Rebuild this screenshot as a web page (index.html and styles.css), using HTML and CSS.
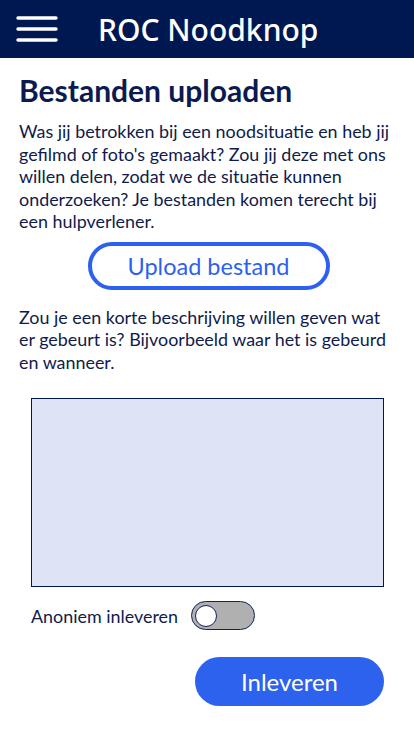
FILE: index.html
```html
<!DOCTYPE html>
<html lang="nl">
<head>
<meta charset="utf-8">
<title>ROC Noodknop</title>
<link rel="stylesheet" href="styles.css">
</head>
<body>
<header class="topbar">
  <button class="menu" aria-label="Menu">
    <svg width="42" height="26" viewBox="0 0 42 26"><g stroke="#fff" stroke-width="3.4" stroke-linecap="round"><line x1="2" y1="2" x2="40" y2="2"/><line x1="2" y1="13" x2="40" y2="13"/><line x1="2" y1="24" x2="40" y2="24"/></g></svg>
  </button>
  <h1 class="brand">ROC Noodknop</h1>
</header>
<main class="content">
  <h2 class="title">Bestanden uploaden</h2>
  <p class="text">Was jij betrokken bij een noodsituatie en heb jij gefilmd of foto's gemaakt? Zou jij deze met ons willen delen, zodat we de situatie kunnen onderzoeken? Je bestanden komen terecht bij een hulpverlener.</p>
  <div class="upload-wrap"><button class="upload">Upload bestand</button></div>
  <p class="text">Zou je een korte beschrijving willen geven wat er gebeurt is? Bijvoorbeeld waar het is gebeurd en wanneer.</p>
  <div class="form">
    <textarea class="desc" autofocus></textarea>
    <label class="anon">Anoniem inleveren <span class="toggle"><span class="knob"></span></span></label>
    <div class="submit-row"><button class="submit">Inleveren</button></div>
  </div>
</main>
</body>
</html>
```
FILE: styles.css
```css
* { box-sizing: border-box; }
body { margin: 0; font-family: Lato, "Open Sans", sans-serif; color: #0f1b4c; background: #fff; }
.topbar { height: 58px; background: #001851; display: flex; align-items: center; padding-left: 16px; }
.menu { background: none; border: 0; padding: 0; width: 42px; height: 26px; display: flex; }
.brand { margin: 0 0 0 40px; color: #fff; font-family: "Noto Sans", Lato, sans-serif; font-weight: 500; font-size: 30px; letter-spacing: 0; }
.content { padding: 14px 19px 0 19px; }
.title { margin: 0; font-size: 30px; font-weight: 700; color: #0b1a50; line-height: 36px; }
.text { margin: 12px 0 0 0; font-size: 17.9px; line-height: 22.5px; color: #0f1b4c; }
.upload-wrap { display: flex; justify-content: center; margin: 9px 0 0 3px; }
.upload { width: 242px; height: 48px; border: 4px solid #2d5ff0; border-radius: 24px; background: #fff; color: #2d5ff0; font-family: Lato, sans-serif; font-size: 23.5px; padding: 0; }
.upload-wrap + .text { margin-top: 16px; }
.form { padding: 0 11px 0 12px; margin-top: 25px; }
.desc { display: block; width: 353px; height: 189px; background: #dee3f6; border: 1.5px solid #001851; border-radius: 0; resize: none; margin: 0; outline: none; caret-color: #777; padding: 6px 5px; }
.anon { display: flex; align-items: center; margin-top: 14px; font-size: 17.9px; color: #0f1b4c; }
.toggle { margin-left: 13px; width: 64px; height: 29px; border: 1.5px solid #13225a; border-radius: 15px; background: #b0b0b0; display: flex; align-items: center; padding-left: 3px; }
.knob { width: 22px; height: 22px; border-radius: 50%; background: #fff; border: 1.5px solid #13225a; }
.submit-row { display: flex; justify-content: flex-end; margin-top: 27px; }
.submit { width: 189px; height: 49px; border: 0; border-radius: 25px; background: #2d62ee; color: #fff; font-family: Lato, sans-serif; font-size: 24px; padding: 0; }
```
